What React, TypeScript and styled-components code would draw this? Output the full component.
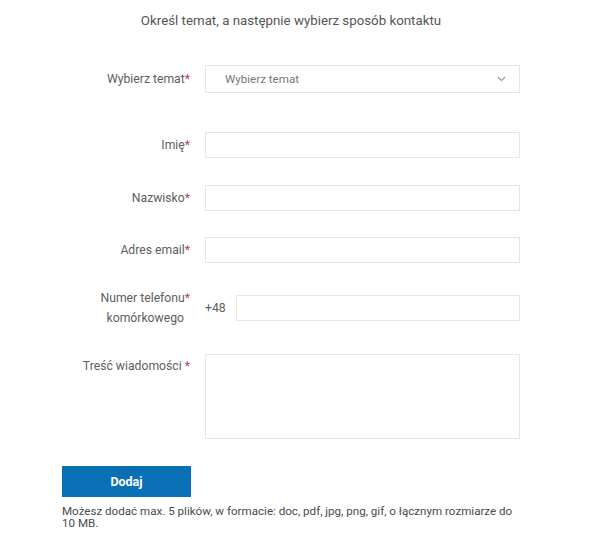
import styled, { createGlobalStyle } from 'styled-components';

const GlobalStyle = createGlobalStyle`
  body {
    margin: 0;
    background: #fff;
    font-family: Roboto, "Liberation Sans", Arial, sans-serif;
  }
`;

function ChevronDown() {
  return (
    <svg width="9" height="6" viewBox="0 0 9 6" fill="none">
      <path d="M1 1l3.5 3.5L8 1" stroke="#999" strokeWidth="1.1" />
    </svg>
  );
}

function Req({ spaced }: { spaced?: boolean }) {
  return <Star>{spaced ? ' *' : '*'}</Star>;
}

export default function App() {
  return (
    <>
      <GlobalStyle />
      <Form>
        <Title>Określ temat, a następnie wybierz sposób kontaktu</Title>

        <Row $mb={39}>
          <Label>
            Wybierz temat<Req />
          </Label>
          <Select>
            <span>Wybierz temat</span>
            <ChevronDown />
          </Select>
        </Row>

        <Row $mb={27}>
          <Label>
            Imię<Req />
          </Label>
          <Input />
        </Row>

        <Row $mb={26}>
          <Label>
            Nazwisko<Req />
          </Label>
          <Input />
        </Row>

        <Row $mb={25}>
          <Label>
            Adres email<Req />
          </Label>
          <Input />
        </Row>

        <Row $mb={26}>
          <Label $center>
            Numer telefonu<Req />
            <br />
            komórkowego
          </Label>
          <Phone>
            <Prefix>+48</Prefix>
            <Input />
          </Phone>
        </Row>

        <Row $mb={27} $top>
          <Label $pt={2}>
            Treść wiadomości<Req spaced />
          </Label>
          <TextArea />
        </Row>

        <Button type="button">Dodaj</Button>
        <Note>
          Możesz dodać max. 5 plików, w formacie: doc, pdf, jpg, png, gif, o łącznym rozmiarze do 10 MB.
        </Note>
      </Form>
    </>
  );
}

const Form = styled.form`
  width: 458px;
  margin-left: 62px;
  padding-top: 12px;
`;

const Title = styled.h2`
  margin: 0 0 35px;
  text-align: center;
  font-size: 13.3px;
  font-weight: 400;
  color: #555;
  line-height: 18px;
`;

const Row = styled.div<{ $mb: number; $top?: boolean }>`
  display: grid;
  grid-template-columns: 128px 1fr;
  column-gap: 15px;
  align-items: ${(p) => (p.$top ? 'start' : 'center')};
  margin-bottom: ${(p) => p.$mb}px;
`;

const Label = styled.label<{ $center?: boolean; $pt?: number }>`
  font-size: 12.2px;
  line-height: 20px;
  color: #5e5e5e;
  text-align: ${(p) => (p.$center ? 'center' : 'right')};
  padding-top: ${(p) => p.$pt ?? 0}px;
  justify-self: end;
`;

const Star = styled.span`
  color: #c8375a;
`;

const Select = styled.div`
  height: 28px;
  box-sizing: border-box;
  border: 1px solid #e6e6e6;
  display: flex;
  align-items: center;
  justify-content: space-between;
  padding: 0 13px 0 19px;
  font-size: 11.6px;
  color: #777;
`;

const Input = styled.input`
  display: block;
  width: 100%;
  height: 26px;
  box-sizing: border-box;
  border: 1px solid #e6e6e6;
  outline: none;
  padding: 0 8px;
  font: inherit;
`;

const Phone = styled.div`
  display: flex;
  align-items: center;
  gap: 10px;
`;

const Prefix = styled.span`
  font-size: 12.2px;
  color: #5e5e5e;
  width: 21px;
  flex: none;
`;

const TextArea = styled.textarea`
  display: block;
  width: 100%;
  height: 85px;
  box-sizing: border-box;
  border: 1px solid #e6e6e6;
  resize: none;
  outline: none;
  font: inherit;
`;

const Button = styled.button`
  display: block;
  width: 129px;
  height: 31px;
  border: none;
  background: #0a70b6;
  color: #fff;
  font-family: inherit;
  font-size: 12.5px;
  font-weight: 700;
  cursor: pointer;
  padding: 0;
`;

const Note = styled.p`
  margin: 8px 0 0;
  max-width: 452px;
  font-size: 11.6px;
  line-height: 12px;
  color: #4a4a4a;
`;
